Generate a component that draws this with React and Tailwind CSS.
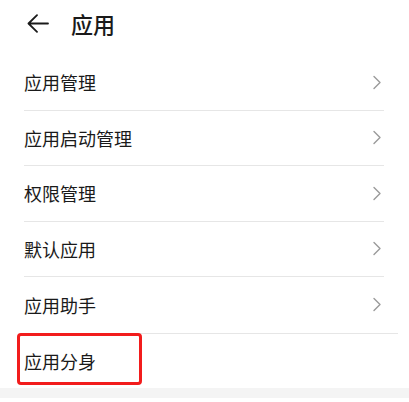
import React from "react";

const items = ["应用管理", "应用启动管理", "权限管理", "默认应用", "应用助手"];

function Chevron() {
  return (
    <svg width="10" height="15" viewBox="0 0 10 15" fill="none" className="shrink-0">
      <path d="M2 1.5 L8 7.5 L2 13.5" stroke="#9a9a9a" strokeWidth="1.4" strokeLinecap="round" strokeLinejoin="round" />
    </svg>
  );
}

export default function App() {
  return (
    <div
      className="w-[409px] h-[402px] bg-white overflow-hidden text-[#1a1a1a]"
      style={{ fontFamily: '"Noto Sans CJK SC", "Noto Sans", sans-serif' }}
    >
      <div className="h-[55px] flex items-start pt-[8px]">
        <div className="ml-[27px] h-[30px] flex items-center">
          <svg width="22" height="19" viewBox="0 0 22 19" fill="none">
            <path d="M21 9.5 H2 M10 1.2 L1.5 9.5 L10 17.8" stroke="#1a1a1a" strokeWidth="1.8" strokeLinecap="round" strokeLinejoin="round" />
          </svg>
        </div>
        <div className="ml-[22px] h-[30px] flex items-center text-[22px] leading-none font-medium">应用</div>
      </div>
      <div className="ml-6 mr-[25px]">
        {items.map((t, i) => (
          <div
            key={t}
            className={
              "h-[55.5px] flex items-center justify-between " +
              (i < items.length - 1 ? "border-b border-[#e6e6e6]" : "")
            }
          >
            <span className="text-[18px] leading-none">{t}</span>
            <span className="mr-[2px]"><Chevron /></span>
          </div>
        ))}
      </div>
      <div className="ml-6 mr-[11px] h-px bg-[#e6e6e6]" />
      <div className="relative ml-6 h-[54px] flex items-center">
        <span className="text-[18px] leading-none">应用分身</span>
        <div className="absolute left-[-7px] top-[-1px] w-[125px] h-[52px] border-[3px] border-[#f21c1c] rounded-[4px]" />
      </div>
      <div className="h-[10px] bg-[#f4f4f4]" />
    </div>
  );
}
